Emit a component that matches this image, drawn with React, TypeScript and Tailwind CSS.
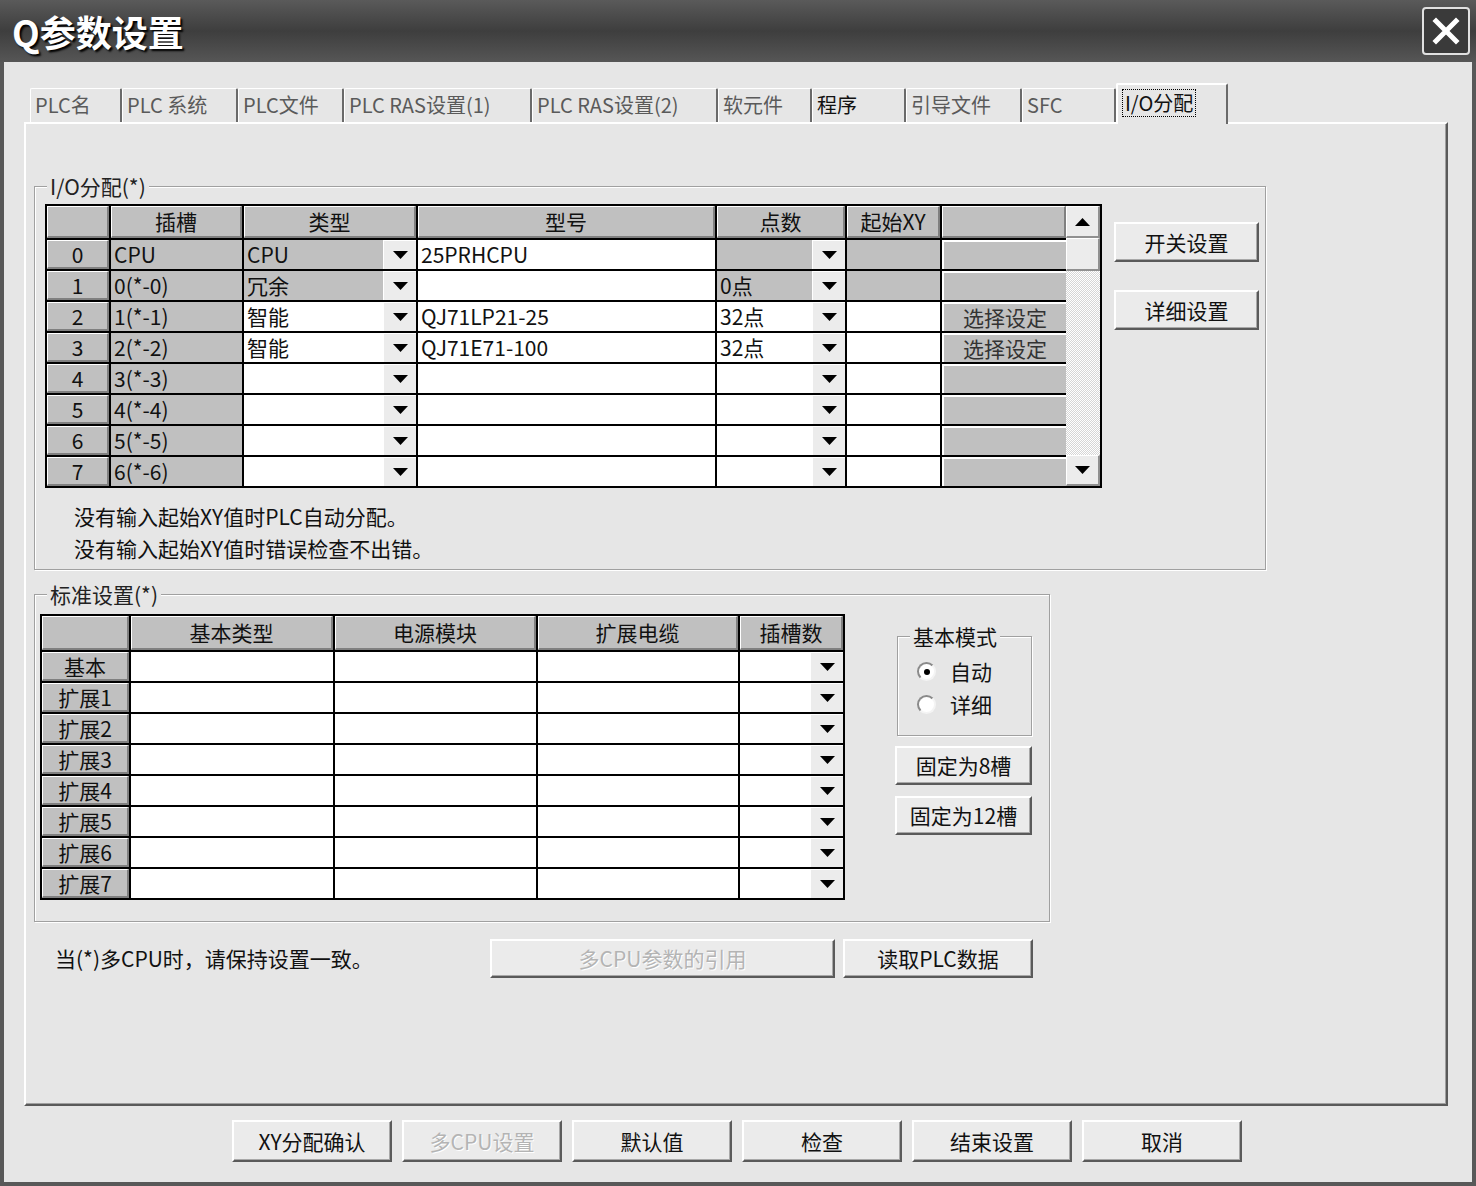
import React from 'react';

type IoRow = {
  n: string;
  slot: string;
  type?: string;
  typeGray?: boolean;
  model?: string;
  pts?: string;
  ptsGray?: boolean;
  xyGray?: boolean;
  btn?: string;
};

const ioRows: IoRow[] = [
  { n: '0', slot: 'CPU', type: 'CPU', typeGray: true, model: '25PRHCPU', ptsGray: true, xyGray: true },
  { n: '1', slot: '0(*-0)', type: '冗余', typeGray: true, pts: '0点', ptsGray: true, xyGray: true },
  { n: '2', slot: '1(*-1)', type: '智能', model: 'QJ71LP21-25', pts: '32点', btn: '选择设定' },
  { n: '3', slot: '2(*-2)', type: '智能', model: 'QJ71E71-100', pts: '32点', btn: '选择设定' },
  { n: '4', slot: '3(*-3)' },
  { n: '5', slot: '4(*-4)' },
  { n: '6', slot: '5(*-5)' },
  { n: '7', slot: '6(*-6)' },
];

const baseRows = ['基本', '扩展1', '扩展2', '扩展3', '扩展4', '扩展5', '扩展6', '扩展7'];

const tabs = [
  { label: 'PLC名', w: 'w-[92px]' },
  { label: 'PLC 系统', w: 'w-[116px]' },
  { label: 'PLC文件', w: 'w-[106px]' },
  { label: 'PLC RAS设置(1)', w: 'w-[188px]' },
  { label: 'PLC RAS设置(2)', w: 'w-[186px]' },
  { label: '软元件', w: 'w-[94px]' },
  { label: '程序', w: 'w-[94px]', dark: true },
  { label: '引导文件', w: 'w-[116px]' },
  { label: 'SFC', w: 'w-[94px]' },
];

const hdr =
  'bg-[#c0c0c0] border-t border-l border-t-white border-l-white border-r-2 border-b-2 border-r-[#808080] border-b-[#808080] flex items-center justify-center text-[#111]';

function Arrow({ up = false }: { up?: boolean }) {
  return (
    <svg width="15" height="8" viewBox="0 0 15 8">
      <path d={up ? 'M0 8 L7.5 0 L15 8 Z' : 'M0 0 L15 0 L7.5 8 Z'} fill="#000" />
    </svg>
  );
}

function DropBtn() {
  return (
    <div className="w-[33px] self-stretch shrink-0 bg-[#ececec] border-t border-l border-t-white border-l-white flex items-center justify-center">
      <Arrow />
    </div>
  );
}

function Btn({ children, className = '', disabled = false }: { children: React.ReactNode; className?: string; disabled?: boolean }) {
  return (
    <button
      className={`bg-[#ebebeb] border-t-2 border-l-2 border-t-white border-l-white border-r-2 border-b-2 border-r-[#5a5a5a] border-b-[#5a5a5a] shadow-[inset_-1px_-1px_0_#a8a8a8] text-[21px] leading-none flex items-center justify-center ${
        disabled ? 'text-[#b4b4b4] [text-shadow:1px_1px_0_#fff]' : 'text-[#111]'
      } ${className}`}
    >
      {children}
    </button>
  );
}

function Group({ label, className = '', children }: { label: string; className?: string; children: React.ReactNode }) {
  return (
    <div className={`relative border border-[#a0a0a0] shadow-[inset_1px_1px_0_#fff,1px_1px_0_#fff] ${className}`}>
      <span className="absolute -top-[14px] left-[12px] px-[3px] bg-[#e6e6e6] text-[21px] leading-[26px] text-[#222]">{label}</span>
      {children}
    </div>
  );
}

function IoGrid() {
  return (
    <div className="w-[1057px] h-[284px] border-2 border-black bg-black flex text-[21px] leading-none">
      <div className="w-[1019px] grid grid-cols-[62px_131px_172px_297px_128px_93px_124px] grid-rows-[32px_repeat(8,29px)] gap-[2px]">
        <div className={hdr}></div>
        <div className={hdr}>插槽</div>
        <div className={hdr}>类型</div>
        <div className={hdr}>型号</div>
        <div className={hdr}>点数</div>
        <div className={hdr}>起始XY</div>
        <div className={hdr}></div>
        {ioRows.map((r) => (
          <React.Fragment key={r.n}>
            <div className={hdr}>{r.n}</div>
            <div className="bg-[#c0c0c0] flex items-center pl-[3px] text-[#111]">{r.slot}</div>
            <div className={`${r.typeGray ? 'bg-[#c0c0c0]' : 'bg-white'} flex items-center justify-between pl-[3px]`}>
              <span>{r.type ?? ''}</span>
              <DropBtn />
            </div>
            <div className="bg-white flex items-center pl-[3px]">{r.model ?? ''}</div>
            <div className={`${r.ptsGray ? 'bg-[#c0c0c0]' : 'bg-white'} flex items-center justify-between pl-[3px]`}>
              <span>{r.pts ?? ''}</span>
              <DropBtn />
            </div>
            <div className={r.xyGray ? 'bg-[#c0c0c0]' : 'bg-white'}></div>
            <div className="bg-[#c0c0c0] border-t-2 border-l-2 border-t-white border-l-white flex items-center justify-center text-[#333]">
              {r.btn ?? ''}
            </div>
          </React.Fragment>
        ))}
      </div>
      <div className="w-[34px] flex flex-col bg-white">
        <div className="h-[32px] bg-[#ececec] border-t border-l border-t-white border-l-white border-r-2 border-b-2 border-r-[#909090] border-b-[#909090] flex items-center justify-center">
          <Arrow up />
        </div>
        <div className="h-[33px] bg-[#ececec] border-t border-l border-t-white border-l-white border-r-2 border-b-2 border-r-[#909090] border-b-[#909090]"></div>
        <div className="flex-1 bg-[image:repeating-conic-gradient(#ffffff_0_25%,#d6d6d6_0_50%)] bg-[length:2px_2px]"></div>
        <div className="h-[31px] bg-[#ececec] border-t border-l border-t-white border-l-white border-r-2 border-b-2 border-r-[#909090] border-b-[#909090] flex items-center justify-center">
          <Arrow />
        </div>
      </div>
    </div>
  );
}

function BaseGrid() {
  return (
    <div className="w-[805px] h-[286px] border-2 border-black bg-black grid grid-cols-[87px_202px_201px_200px_103px] grid-rows-[34px_repeat(8,29px)] gap-[2px] text-[21px] leading-none">
      <div className={hdr}></div>
      <div className={hdr}>基本类型</div>
      <div className={hdr}>电源模块</div>
      <div className={hdr}>扩展电缆</div>
      <div className={hdr}>插槽数</div>
      {baseRows.map((r) => (
        <React.Fragment key={r}>
          <div className={hdr}>{r}</div>
          <div className="bg-white"></div>
          <div className="bg-white"></div>
          <div className="bg-white"></div>
          <div className="bg-white flex justify-end">
            <DropBtn />
          </div>
        </React.Fragment>
      ))}
    </div>
  );
}

function Radio({ label, checked = false }: { label: string; checked?: boolean }) {
  return (
    <div className="flex items-center gap-[14px] h-[33px] pl-[19px]">
      <div className="w-[19px] h-[19px] rounded-full border-2 border-t-[#8a8a8a] border-l-[#8a8a8a] border-r-[#f4f4f4] border-b-[#f4f4f4] bg-white flex items-center justify-center">
        {checked && <div className="w-[6px] h-[6px] rounded-full bg-black"></div>}
      </div>
      <span className="text-[21px] leading-none text-[#111]">{label}</span>
    </div>
  );
}

export default function App() {
  return (
    <div className="w-[1476px] h-[1186px] bg-[#e6e6e6] flex flex-col font-['Noto_Sans_CJK_SC',sans-serif] text-[#111] overflow-hidden">
      {/* title bar */}
      <div className="h-[62px] shrink-0 bg-gradient-to-b from-[#5a5a5a] via-[#3e3e3e] to-[#565656] flex items-center justify-between pl-[12px] pr-[6px]">
        <span className="text-[36px] font-bold leading-none text-white [text-shadow:2px_2px_2px_#000]">Q参数设置</span>
        <div className="w-[48px] h-[48px] rounded-[4px] border-2 border-[#e0e0e0] bg-[#3a3a3a] flex items-center justify-center">
          <svg width="28" height="28" viewBox="0 0 28 28">
            <path d="M4 4 L24 24 M24 4 L4 24" stroke="#fff" strokeWidth="5" strokeLinecap="square" />
          </svg>
        </div>
      </div>

      <div className="flex-1 flex flex-col border-l-4 border-r-4 border-b-4 border-[#585858] pl-[20px]">
        {/* tabs */}
        <div className="mt-[21px] h-[39px] flex items-end pl-[6px]">
          {tabs.map((t) => (
            <div
              key={t.label}
              className={`${t.w} h-[34px] border-t border-l border-t-white border-l-white border-r-2 border-r-[#6a6a6a] rounded-t-[2px] flex items-center pl-[4px] pb-[2px] text-[20px] leading-none whitespace-nowrap ${
                t.dark ? 'text-[#111]' : 'text-[#5a5a5a]'
              }`}
            >
              {t.label}
            </div>
          ))}
          <div className="relative z-10 -mb-[2px] w-[112px] h-[41px] bg-[#e6e6e6] border-t-2 border-l-2 border-t-white border-l-white border-r-2 border-r-[#6a6a6a] rounded-t-[2px] flex items-center pl-[4px] pb-[4px]">
            <span className="border border-dotted border-black px-[2px] text-[20px] leading-[26px] text-[#111]">I/O分配</span>
          </div>
        </div>

        {/* panel */}
        <div className="w-[1424px] h-[984px] border-t-2 border-l-2 border-t-white border-l-white border-r-2 border-b-2 border-r-[#5a5a5a] border-b-[#5a5a5a] shadow-[inset_-1px_-1px_0_#a0a0a0] flex flex-col pl-[8px] pt-[62px]">
          <Group label="I/O分配(*)" className="w-[1232px] h-[384px] pl-[10px] pt-[17px]">
            <div className="flex">
              <IoGrid />
              <div className="ml-[12px] pt-[18px] flex flex-col gap-[28px]">
                <Btn className="w-[145px] h-[40px]">开关设置</Btn>
                <Btn className="w-[145px] h-[40px]">详细设置</Btn>
              </div>
            </div>
            <div className="mt-[12px] pl-[29px] text-[21px] leading-[32px] text-[#111]">
              <div>没有输入起始XY值时PLC自动分配。</div>
              <div>没有输入起始XY值时错误检查不出错。</div>
            </div>
          </Group>

          <Group label="标准设置(*)" className="mt-[24px] w-[1016px] h-[328px] pl-[5px] pt-[19px]">
            <div className="flex">
              <BaseGrid />
              <div className="ml-[50px] flex flex-col">
                <div className="ml-[2px] mt-[22px] w-[135px] h-[100px] relative border border-[#a0a0a0] shadow-[inset_1px_1px_0_#fff,1px_1px_0_#fff] pt-[18px]">
                  <span className="absolute -top-[14px] left-[12px] px-[3px] bg-[#e6e6e6] text-[21px] leading-[26px] text-[#111]">基本模式</span>
                  <Radio label="自动" checked />
                  <Radio label="详细" />
                </div>
                <Btn className="mt-[10px] w-[137px] h-[39px]">固定为8槽</Btn>
                <Btn className="mt-[11px] w-[137px] h-[39px]">固定为12槽</Btn>
              </div>
            </div>
          </Group>

          <div className="mt-[17px] flex items-center">
            <div className="w-[456px] pl-[21px] text-[21px] leading-none text-[#111]">当(*)多CPU时，请保持设置一致。</div>
            <Btn disabled className="w-[345px] h-[39px]">多CPU参数的引用</Btn>
            <Btn className="ml-[8px] w-[190px] h-[39px]">读取PLC数据</Btn>
          </div>
        </div>

        {/* bottom buttons */}
        <div className="mt-[14px] ml-[208px] flex gap-[10px]">
          <Btn className="w-[160px] h-[42px]">XY分配确认</Btn>
          <Btn disabled className="w-[160px] h-[42px]">多CPU设置</Btn>
          <Btn className="w-[160px] h-[42px]">默认值</Btn>
          <Btn className="w-[160px] h-[42px]">检查</Btn>
          <Btn className="w-[160px] h-[42px]">结束设置</Btn>
          <Btn className="w-[160px] h-[42px]">取消</Btn>
        </div>
      </div>
    </div>
  );
}
